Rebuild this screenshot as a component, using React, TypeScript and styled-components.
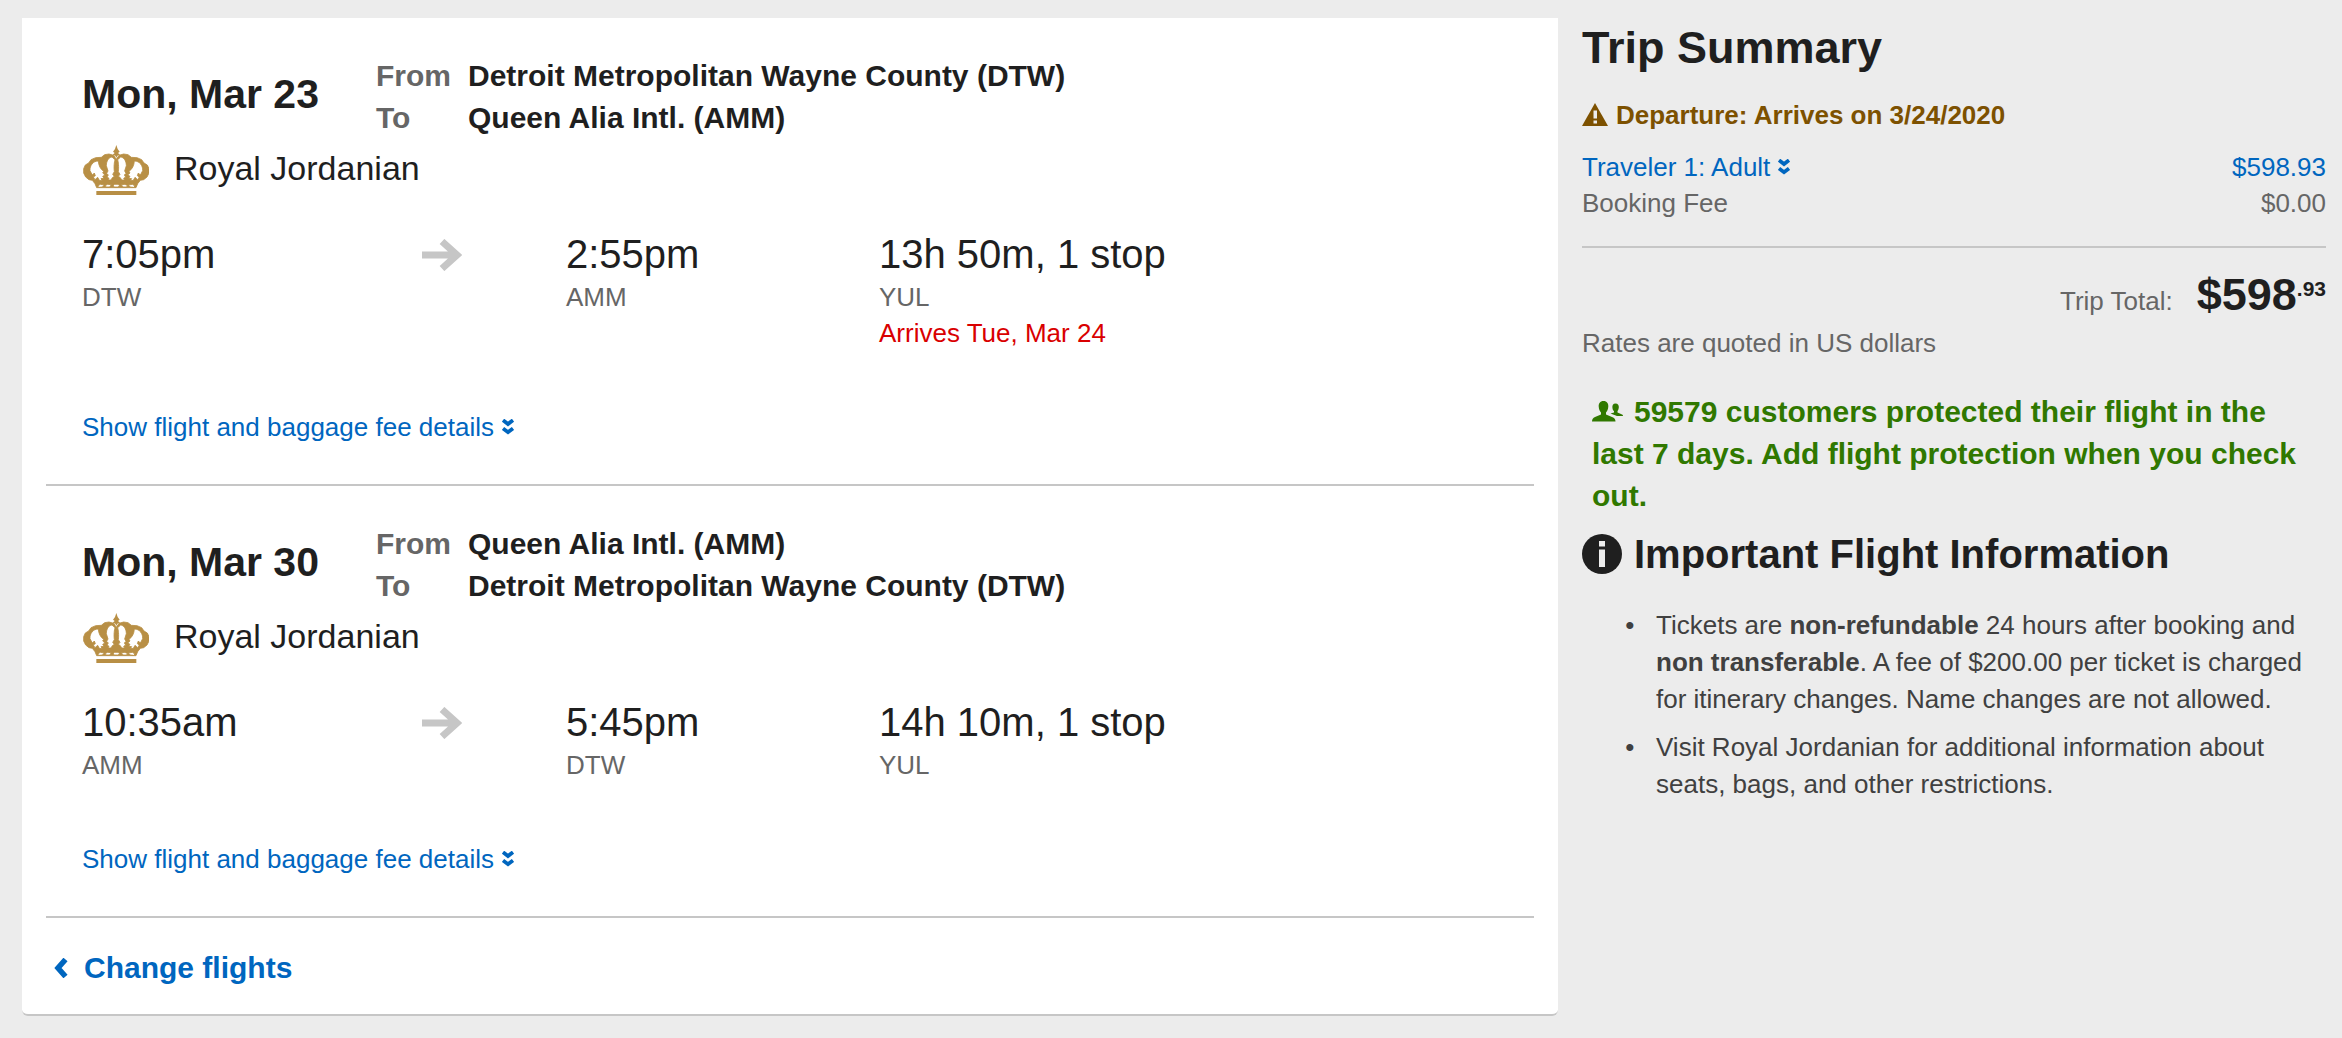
import React from "react";
import styled, { createGlobalStyle } from "styled-components";

const color = {
  page: "#ececec",
  card: "#ffffff",
  ink: "#1f1f1f",
  body: "#404040",
  muted: "#666666",
  rule: "#c6c6c6",
  link: "#0066bf",
  alert: "#d90000",
  warn: "#7d5100",
  good: "#307800",
  gold: "#b88f45",
};

const GlobalStyle = createGlobalStyle`
  *, *::before, *::after { box-sizing: border-box; }
  body {
    margin: 0;
    background: ${color.page};
    color: ${color.ink};
    font-family: "Liberation Sans", Arial, sans-serif;
    font-size: 26px;
    line-height: 36px;
  }
  svg { display: block; flex: none; }
`;

const Page = styled.div`
  display: grid;
  grid-template-columns: minmax(0, 64fr) minmax(0, 31fr);
  gap: 24px;
  align-items: start;
  padding: 18px 16px 22px 22px;
`;

const Card = styled.main`
  background: ${color.card};
  border-bottom: 2px solid ${color.rule};
  border-radius: 0 0 6px 6px;
  padding: 0 24px;
`;

const Leg = styled.section`
  padding: 37px 36px 39px;
  border-bottom: 2px solid ${color.rule};
`;

const LegHeader = styled.header`
  display: grid;
  grid-template-columns: 294px 1fr;
`;

const LegDate = styled.h2`
  margin: 0;
  padding-top: 8px;
  font-size: 41px;
  line-height: 62px;
`;

const Route = styled.dl`
  display: grid;
  grid-template-columns: 92px 1fr;
  margin: 0;
  font-size: 30px;
  font-weight: bold;
  line-height: 42px;
`;

const RouteLabel = styled.dt`
  color: ${color.muted};
`;

const RoutePlace = styled.dd`
  margin: 0;
`;

const Airline = styled.div`
  display: flex;
  align-items: center;
  gap: 25px;
  margin-top: 2px;
  padding-left: 1px;
  font-size: 34px;
  line-height: 54px;
`;

const Times = styled.div`
  display: grid;
  grid-template-columns: 340fr 144fr 313fr 619fr;
  margin-top: 34px;
`;

const Stop = styled.div`
  color: ${color.muted};
`;

const Big = styled.div`
  color: ${color.ink};
  font-size: 40px;
  line-height: 50px;
`;

const ArrowCell = styled.div`
  display: flex;
  align-items: center;
  height: 52px;
`;

const Notice = styled.div`
  color: ${color.alert};
`;

const TextButton = styled.button`
  display: inline-flex;
  align-items: center;
  gap: 8px;
  padding: 0;
  border: 0;
  background: none;
  color: ${color.link};
  font: inherit;
  cursor: pointer;
`;

const Details = styled.div`
  display: flex;
  margin-top: 58px;
`;

const CardFooter = styled.footer`
  padding: 29px 8px 25px;
`;

const BackLink = styled.a`
  display: inline-flex;
  align-items: center;
  gap: 16px;
  color: ${color.link};
  font-size: 30px;
  font-weight: bold;
  line-height: 42px;
  text-decoration: none;
`;

const Summary = styled.aside`
  color: ${color.muted};
`;

const SummaryTitle = styled.h1`
  margin: 0;
  color: ${color.ink};
  font-size: 45px;
  line-height: 60px;
`;

const Warning = styled.p`
  display: flex;
  align-items: center;
  gap: 8px;
  margin: 19px 0 16px;
  color: ${color.warn};
  font-weight: bold;
`;

const Fees = styled.table`
  width: 100%;
  border-collapse: collapse;
`;

const FeeName = styled.th`
  padding: 0;
  font-weight: normal;
  text-align: left;
`;

const FeeAmount = styled.td<{ $linked?: boolean }>`
  padding: 0;
  color: ${(p) => (p.$linked ? color.link : "inherit")};
  text-align: right;
`;

const FeeToggle = styled(TextButton)`
  display: flex;
`;

const Total = styled.div`
  display: flex;
  justify-content: flex-end;
  align-items: baseline;
  gap: 24px;
  margin-top: 25px;
  padding-top: 17px;
  border-top: 2px solid ${color.rule};
`;

const Price = styled.strong`
  color: ${color.ink};
  font-size: 45px;
  line-height: 60px;
`;

const Cents = styled.sup`
  font-size: 21px;
  line-height: 0;
  vertical-align: 14px;
`;

const Note = styled.p`
  margin: 0;
`;

const Protection = styled.p`
  margin: 30px 10px 7px;
  color: ${color.good};
  font-size: 30px;
  font-weight: bold;
  line-height: 42px;

  svg {
    display: inline-block;
    margin-right: 11px;
    vertical-align: baseline;
  }
`;

const InfoTitle = styled.h2`
  display: flex;
  align-items: center;
  gap: 12px;
  margin: 0;
  color: ${color.ink};
  font-size: 40px;
  line-height: 60px;
`;

const InfoList = styled.ul`
  display: grid;
  gap: 11px;
  margin: 23px 0 0;
  padding: 0 16px 0 74px;
  color: ${color.body};
  line-height: 37px;
  list-style-type: "•\\00a0\\00a0\\00a0";
`;

function Crown() {
  return (
    <svg width="66" height="54" viewBox="38 18 198 162" fill={color.gold} aria-hidden="true">
      <path d="M138 30l4 12 6 8-5 4 6 5-8 3-3 6-3-6-8-3 6-5-5-4 6-8z" />
      <path
        fillRule="evenodd"
        stroke={color.gold}
        strokeWidth="2.5"
        d="M138 73L130 61 116 57 103 59 93 67 76 68 62 74 55 84 45 90 40 101 40 114 46 126 56 134 66 136 74 146 79 158H197L202 146 210 136 220 134 230 126 236 114 236 101 231 90 221 84 214 74 200 68 183 67 173 59 160 57 146 61Z
        M125 66C115 67 108 78 108 92L113 108 109 115 114 120 110 126 116 130 113 135H122L126 128 132 124 127 118 132 110C130 96 132 80 134 74Z
        M151 66C161 67 168 78 168 92L163 108 167 115 162 120 166 126 160 130 163 135H154L150 128 144 124 149 118 144 110C146 96 144 80 142 74Z
        M84 78C68 78 58 92 59 107L66 120 72 114 75 122 69 126 74 134 82 127 87 136 96 137 92 131 101 130 97 124 104 120 97 114 100 109C90 102 85 92 84 78Z
        M192 78C208 78 218 92 217 107L210 120 204 114 201 122 207 126 202 134 194 127 189 136 180 137 184 131 175 130 179 124 172 120 179 114 176 109C186 102 191 92 192 78Z
        M82 153L90 148 102 150 96 156 86 157Z
        M194 153L186 148 174 150 180 156 190 157Z
        M104 152L112 148 123 149 118 156 108 156Z
        M172 152L164 148 153 149 158 156 168 156Z
        M128 152L133 148H143L148 152 143 156H133Z"
      />
      <path d="M78 168h120v12H78z" />
    </svg>
  );
}

function ArrowRight() {
  return (
    <svg width="40" height="32" viewBox="0 0 40 32" fill="none" stroke={color.rule} strokeWidth="7" aria-hidden="true">
      <path d="M0 16H33M20 2.5L35 16 20 29.5" />
    </svg>
  );
}

function DoubleChevron() {
  return (
    <svg width="12" height="16" viewBox="0 0 12 16" fill="none" stroke="currentColor" strokeWidth="3.8" aria-hidden="true">
      <path d="M1 1.200L6 5 11 1.200M1 9.400L6 13.200 11 9.400" />
    </svg>
  );
}

function ChevronLeft() {
  return (
    <svg width="14" height="20" viewBox="0 0 14 20" fill="none" stroke="currentColor" strokeWidth="5.5" aria-hidden="true">
      <path d="M11.500 1.500L4 10 11.500 18.500" />
    </svg>
  );
}

function WarningIcon() {
  return (
    <svg width="26" height="24" viewBox="0 0 26 24" aria-hidden="true">
      <path d="M13 0L26 23H0Z" fill={color.warn} />
      <path d="M11.500 7.500h3.500v8h-3.500zM11.500 17.500h3.500v3h-3.500z" fill={color.page} />
    </svg>
  );
}

function PeopleIcon() {
  return (
    <svg width="31" height="21" viewBox="0 0 31 21" fill={color.good} aria-hidden="true">
      <path d="M11.500 0C15 0 16.500 2.500 16.300 5.500 16.200 8.500 15 10.500 14 11.500V13.500L20 16C22.500 17 23.500 18 23.500 20.500H0C0 18 1 17 3 16L9 13.500V11.500C8 10.500 6.800 8.500 6.700 5.500 6.500 2.500 8 0 11.500 0Z" />
      <path d="M23.500 2.500C26 2.500 27 4.500 26.800 6.500 26.700 8 26 9.500 25.500 10V11.500L29 13C30.500 13.500 31 14 31 15H25L18.500 12.500 22 11.500V10C21 9.500 20.500 8 20.400 6.500 20.200 4.500 21 2.500 23.500 2.500Z" />
    </svg>
  );
}

function InfoIcon() {
  return (
    <svg width="40" height="40" viewBox="0 0 40 40" aria-hidden="true">
      <circle cx="20" cy="20" r="20" fill={color.ink} />
      <path d="M17 7h6v5.500h-6zM17 15.500h6V33h-6z" fill={color.page} />
    </svg>
  );
}

interface LegData {
  date: string;
  from: string;
  to: string;
  departs: [string, string];
  arrives: [string, string];
  duration: [string, string];
  notice?: string;
}

const legs: LegData[] = [
  {
    date: "Mon, Mar 23",
    from: "Detroit Metropolitan Wayne County (DTW)",
    to: "Queen Alia Intl. (AMM)",
    departs: ["7:05pm", "DTW"],
    arrives: ["2:55pm", "AMM"],
    duration: ["13h 50m, 1 stop", "YUL"],
    notice: "Arrives Tue, Mar 24",
  },
  {
    date: "Mon, Mar 30",
    from: "Queen Alia Intl. (AMM)",
    to: "Detroit Metropolitan Wayne County (DTW)",
    departs: ["10:35am", "AMM"],
    arrives: ["5:45pm", "DTW"],
    duration: ["14h 10m, 1 stop", "YUL"],
  },
];

function StopCell({ value, notice }: { value: [string, string]; notice?: string }) {
  return (
    <Stop>
      <Big>{value[0]}</Big>
      <div>{value[1]}</div>
      {notice && <Notice>{notice}</Notice>}
    </Stop>
  );
}

function FlightLeg({ leg }: { leg: LegData }) {
  return (
    <Leg>
      <LegHeader>
        <LegDate>{leg.date}</LegDate>
        <Route>
          <RouteLabel>From</RouteLabel>
          <RoutePlace>{leg.from}</RoutePlace>
          <RouteLabel>To</RouteLabel>
          <RoutePlace>{leg.to}</RoutePlace>
        </Route>
      </LegHeader>
      <Airline>
        <Crown />
        Royal Jordanian
      </Airline>
      <Times>
        <StopCell value={leg.departs} />
        <ArrowCell>
          <ArrowRight />
        </ArrowCell>
        <StopCell value={leg.arrives} />
        <StopCell value={leg.duration} notice={leg.notice} />
      </Times>
      <Details>
        <TextButton type="button">
          Show flight and baggage fee details
          <DoubleChevron />
        </TextButton>
      </Details>
    </Leg>
  );
}

export default function App() {
  return (
    <>
      <GlobalStyle />
      <Page>
        <Card>
          {legs.map((leg) => (
            <FlightLeg key={leg.date} leg={leg} />
          ))}
          <CardFooter>
            <BackLink href="#flights">
              <ChevronLeft />
              Change flights
            </BackLink>
          </CardFooter>
        </Card>
        <Summary>
          <SummaryTitle>Trip Summary</SummaryTitle>
          <Warning>
            <WarningIcon />
            Departure: Arrives on 3/24/2020
          </Warning>
          <Fees>
            <tbody>
              <tr>
                <FeeName scope="row">
                  <FeeToggle type="button">
                    Traveler 1: Adult
                    <DoubleChevron />
                  </FeeToggle>
                </FeeName>
                <FeeAmount $linked>$598.93</FeeAmount>
              </tr>
              <tr>
                <FeeName scope="row">Booking Fee</FeeName>
                <FeeAmount>$0.00</FeeAmount>
              </tr>
            </tbody>
          </Fees>
          <Total>
            <span>Trip Total:</span>
            <Price>
              $598<Cents>.93</Cents>
            </Price>
          </Total>
          <Note>Rates are quoted in US dollars</Note>
          <Protection>
            <PeopleIcon />
            59579 customers protected their flight in the last 7 days. Add flight protection when you check out.
          </Protection>
          <InfoTitle>
            <InfoIcon />
            Important Flight Information
          </InfoTitle>
          <InfoList>
            <li>
              Tickets are <strong>non-refundable</strong> 24 hours after booking and <strong>non transferable</strong>. A
              fee of $200.00 per ticket is charged for itinerary changes. Name changes are not allowed.
            </li>
            <li>Visit Royal Jordanian for additional information about seats, bags, and other restrictions.</li>
          </InfoList>
        </Summary>
      </Page>
    </>
  );
}
